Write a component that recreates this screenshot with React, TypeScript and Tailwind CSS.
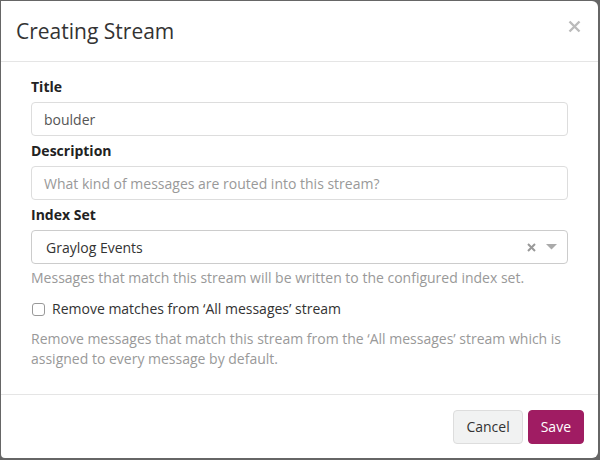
function Field({ label, children }: { label: string; children: React.ReactNode }) {
  return (
    <div className="flex flex-col">
      <label className="mb-[5px] text-[14px] font-bold leading-[20px] text-[#222]">{label}</label>
      {children}
    </div>
  );
}

export default function App() {
  return (
    <div
      className="flex h-[460px] w-[600px] bg-[#666] pb-[2px] pl-[1px] pr-[2px] pt-[1px] text-[#333]"
      style={{ fontFamily: '"Open Sans", "Liberation Sans", sans-serif' }}
    >
      <div className="flex flex-1 flex-col rounded-r-[6px] rounded-bl-[4px] bg-white">
        <div className="flex h-[61px] items-center justify-between border-b border-[#e5e5e5] pl-[15px] pr-[17px]">
          <h4 className="text-[21px] font-normal leading-[30px] text-[#333]">Creating Stream</h4>
          <svg width="13" height="13" viewBox="0 0 13 13" className="mb-[10px]">
            <path d="M1.5 1.5l10 10M11.5 1.5l-10 10" stroke="#bbb" strokeWidth="2.4" />
          </svg>
        </div>

        <div className="flex flex-1 flex-col gap-[5px] px-[30px] pt-[15px]">
          <Field label="Title">
            <div className="flex h-[34px] items-center rounded-[4px] border border-[#ddd] px-[12px] text-[14px] text-[#555]">
              boulder
            </div>
          </Field>
          <Field label="Description">
            <div className="flex h-[34px] items-center rounded-[4px] border border-[#ddd] px-[12px] text-[14px] text-[#999]">
              What kind of messages are routed into this stream?
            </div>
          </Field>
          <div className="flex flex-col">
            <Field label="Index Set">
              <div className="flex h-[34px] items-center rounded-[4px] border border-[#ccc] pl-[14px] pr-[10px] text-[14px] text-[#333]">
                <span className="flex-1">Graylog Events</span>
                <svg width="9" height="9" viewBox="0 0 9 9" className="mr-[10px]">
                  <path d="M1 1l7 7M8 1l-7 7" stroke="#999" strokeWidth="2" />
                </svg>
                <svg width="11" height="6" viewBox="0 0 11 6">
                  <path d="M0 0h11L5.5 5.5z" fill="#aaa" />
                </svg>
              </div>
            </Field>
            <p className="mt-[4px] text-[14px] leading-[20px] text-[#999]">
              Messages that match this stream will be written to the configured index set.
            </p>
          </div>

          <label className="mt-[6px] flex items-center gap-[7px] text-[14px] leading-[20px] text-[#333]">
            <span className="ml-[1px] h-[13px] w-[13px] rounded-[3px] border border-[#999] bg-white" />
            Remove matches from ‘All messages’ stream
          </label>
          <p className="mt-[5px] text-[14px] leading-[20px] text-[#999]">
            Remove messages that match this stream from the ‘All messages’ stream which is assigned to every message by default.
          </p>
        </div>

        <div className="flex h-[64px] items-center justify-end gap-[5px] border-t border-[#e5e5e5] pr-[14px]">
          <button className="h-[34px] rounded-[4px] border border-[#ddd] bg-[#f1f2f2] px-[12px] text-[14px] text-[#333]">
            Cancel
          </button>
          <button className="h-[34px] rounded-[4px] border border-[#9e1e60] bg-[#a01c63] px-[12px] text-[14px] text-white">
            Save
          </button>
        </div>
      </div>
    </div>
  );
}
